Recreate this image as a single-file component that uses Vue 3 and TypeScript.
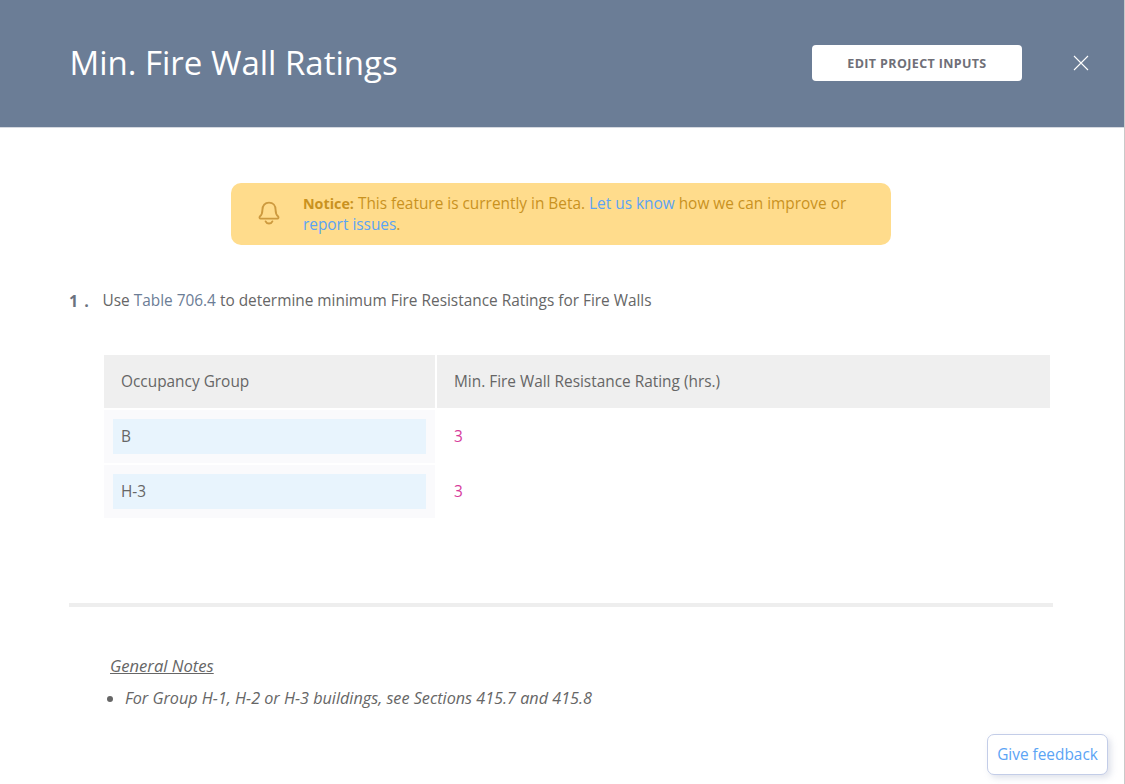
<script setup lang="ts">
interface Row { group: string; rating: string }
const rows: Row[] = [
  { group: 'B', rating: '3' },
  { group: 'H-3', rating: '3' },
]
</script>

<template>
  <div class="modal">
    <header class="head">
      <h1 class="title">Min. Fire Wall Ratings</h1>
      <button class="edit">EDIT PROJECT INPUTS</button>
      <svg class="close" width="16" height="16" viewBox="0 0 16 16" fill="none" stroke="#fff" stroke-width="1.1">
        <path d="M1 1 L15 15 M15 1 L1 15" />
      </svg>
    </header>
    <main class="body">
      <div class="notice-wrap">
        <div class="notice">
          <svg class="bell" width="22" height="26" viewBox="0 0 22 26" fill="none" stroke="#cd9a3f" stroke-width="1.9" stroke-linejoin="round" stroke-linecap="round">
            <path d="M1.8 15.6 C4 14 4.4 11.5 4.4 9 C4.4 4.6 7 1.6 11 1.6 C15 1.6 17.6 4.6 17.6 9 C17.6 11.5 18 14 20.2 15.6 C20.8 16.6 20.4 17.6 19.4 17.6 L2.6 17.6 C1.6 17.6 1.2 16.6 1.8 15.6 Z" />
            <path d="M7.6 20.4 C8.8 23.2 13.2 23.2 14.4 20.4" />
          </svg>
          <p class="notice-text">
            <strong>Notice:</strong> This feature is currently in Beta.
            <a class="link">Let us know</a> how we can improve or
            <a class="link">report issues</a>.
          </p>
        </div>
      </div>

      <div class="step">
        <span class="num">1 .</span>
        <span>Use <a class="ref">Table 706.4</a> to determine minimum Fire Resistance Ratings for Fire Walls</span>
      </div>

      <div class="table">
        <div class="th">Occupancy Group</div>
        <div class="th">Min. Fire Wall Resistance Rating (hrs.)</div>
        <template v-for="r in rows" :key="r.group">
          <div class="cell-a"><div class="chip">{{ r.group }}</div></div>
          <div class="cell-b">{{ r.rating }}</div>
        </template>
      </div>

      <hr class="rule" />

      <section class="notes">
        <div class="notes-title">General Notes</div>
        <ul class="notes-list">
          <li>For Group H-1, H-2 or H-3 buildings, see Sections 415.7 and 415.8</li>
        </ul>
      </section>
    </main>
    <button class="feedback">Give feedback</button>
  </div>
</template>

<style>
html, body { margin: 0; background: #fff; }
</style>

<style scoped>
.modal {
  position: relative;
  box-sizing: border-box;
  width: 1125px;
  height: 784px;
  overflow: hidden;
  background: #fff;
  border-right: 1px solid #c9c9c9;
  font-family: "Open Sans", sans-serif;
  color: #666;
  font-size: 15.4px;
}
.head {
  box-sizing: border-box;
  height: 128px;
  background: #6b7d96;
  border-bottom: 1px solid #d5d9e0;
  display: flex;
  align-items: center;
  padding: 0 35px 1px 69.5px;
}
.title {
  margin: 0;
  flex: 1;
  font-size: 33px;
  font-weight: 400;
  color: #fff;
  line-height: 44px;
}
.edit {
  width: 210px;
  height: 36px;
  border: 0;
  border-radius: 4px;
  background: #fff;
  color: #6f6f78;
  font-family: inherit;
  font-size: 12.5px;
  font-weight: 700;
  letter-spacing: 0.37px;
  margin-right: 51px;
  padding: 0;
}
.close { display: block; }
.body { padding: 55px 71px 0 69px; }
.notice-wrap { display: flex; justify-content: center; }
.notice {
  box-sizing: border-box;
  width: 660px;
  height: 62px;
  border-radius: 10px;
  background: #ffdc8c;
  display: flex;
  align-items: center;
  padding: 0 30px 0 27px;
  gap: 23px;
  color: #c9921f;
}
.bell { flex: none; }
.notice-text { margin: 0; line-height: 21.5px; font-size: 15.4px; }
.notice-text strong { font-size: 14.3px; }
.link { color: #5ba4f5; }
.step {
  margin-top: 46px;
  display: flex;
  line-height: 20px;
  color: #666;
}
.num {
  width: 33.5px;
  font-size: 16px;
  font-weight: 700;
  letter-spacing: 1px;
  color: #6b7280;
}
.ref { color: #6b7d96; }
.table {
  display: grid;
  grid-template-columns: 331px 613px;
  column-gap: 2px;
  row-gap: 2px;
  margin: 44px 0 0 35px;
  width: 946px;
}
.th {
  height: 53px;
  background: #efefef;
  display: flex;
  align-items: center;
  padding-left: 17px;
  color: #666;
}
.cell-a {
  height: 53px;
  box-sizing: border-box;
  background: #fafafc;
  padding: 9px;
}
.chip {
  height: 35px;
  background: #e8f4fd;
  display: flex;
  align-items: center;
  padding-left: 8px;
}
.cell-b {
  height: 53px;
  display: flex;
  align-items: center;
  padding-left: 17px;
  color: #d63a9b;
}
.rule {
  margin: 85px 0 0 0;
  width: 984px;
  height: 4px;
  border: 0;
  background: #eeeeee;
}
.notes { margin: 49px 0 0 42px; font-style: italic; font-size: 16.2px; }
.notes-title { text-decoration: underline; line-height: 20px; font-size: 16.6px; margin-left: -1px; }
.notes-list { margin: 12px 0 0; padding-left: 14px; line-height: 20px; }
.feedback {
  position: absolute;
  left: 987px;
  top: 734px;
  width: 121px;
  height: 41px;
  box-sizing: border-box;
  background: #fff;
  border: 1px solid #c3cde8;
  border-radius: 7px;
  box-shadow: 3px 3px 6px rgba(150, 160, 190, 0.3);
  color: #5ba4f5;
  font-family: inherit;
  font-size: 15.4px;
  padding: 0;
}
</style>
